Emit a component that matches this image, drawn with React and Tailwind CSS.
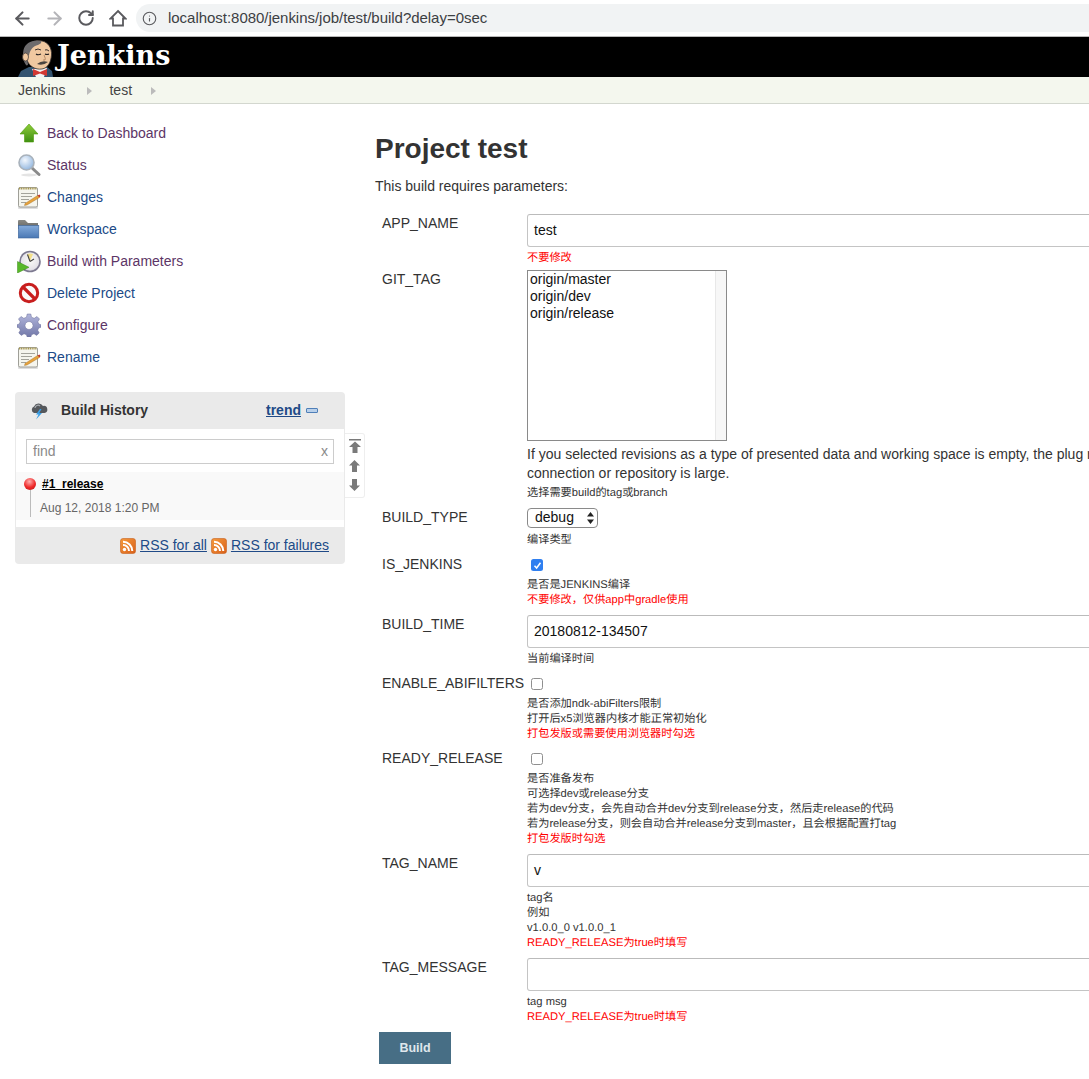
import { ArrowLeft, ArrowRight, RotateCw, Info } from 'lucide-react';

const ArrowIcon = () => (
  <svg width="24" height="24" viewBox="0 0 24 24">
    <defs>
      <linearGradient id="up" x1="0" y1="0" x2="0" y2="1">
        <stop offset="0" stopColor="#8fce3a" />
        <stop offset="1" stopColor="#3f8f12" />
      </linearGradient>
    </defs>
    <path d="M12 3 L21 13 H16.5 V21 H7.5 V13 H3 Z" fill="url(#up)" stroke="#4e9a06" strokeWidth="0.6" />
  </svg>
);

const SearchIcon = () => (
  <svg width="24" height="24" viewBox="0 0 24 24">
    <defs>
      <radialGradient id="lens" cx="0.4" cy="0.35" r="0.7">
        <stop offset="0" stopColor="#f2f7fd" />
        <stop offset="1" stopColor="#8fb4de" />
      </radialGradient>
    </defs>
    <ellipse cx="12" cy="22" rx="8" ry="1.5" fill="#e4e4e4" />
    <path d="M14.5 14.5 L22 21.5" stroke="#8a8a8a" strokeWidth="3" strokeLinecap="round" />
    <circle cx="9.5" cy="9.5" r="7.5" fill="url(#lens)" stroke="#a9b2bb" strokeWidth="1.6" />
  </svg>
);

const NotepadIcon = () => (
  <svg width="24" height="24" viewBox="0 0 24 24">
    <rect x="1" y="4" width="20" height="20" rx="1" fill="#dedede" />
    <rect x="1.5" y="2.5" width="19" height="19.5" rx="1.5" fill="#f5f5ee" stroke="#8c8c84" strokeWidth="0.8" />
    <path d="M2 3.5 H20" stroke="#a89a55" strokeWidth="2.2" strokeDasharray="1.2 0.6" />
    <path d="M4 8.5 H18 M4 11.5 H15 M4 14.5 H12 M4 17.5 H9" stroke="#a4a49c" strokeWidth="1" />
    <path d="M8 18.5 L20.5 10.5 L22.5 12.5 L10 20 L7.5 20.5 Z" fill="#e6a23c" stroke="#9a6a20" strokeWidth="0.4" />
    <path d="M20.5 10.5 L22.5 9.5 L23.5 11 L22.5 12.5 Z" fill="#c0392b" />
  </svg>
);

const FolderIcon = () => (
  <svg width="24" height="24" viewBox="0 0 24 24">
    <defs>
      <linearGradient id="folder" x1="0" y1="0" x2="0" y2="1">
        <stop offset="0" stopColor="#84abdb" />
        <stop offset="1" stopColor="#4a78b4" />
      </linearGradient>
      <linearGradient id="tab" x1="0" y1="0" x2="0" y2="1">
        <stop offset="0" stopColor="#8a8a86" />
        <stop offset="1" stopColor="#62625e" />
      </linearGradient>
    </defs>
    <path d="M1 4 Q1 3 2 3 H8 L11 6 H21 V12 H1 Z" fill="url(#tab)" />
    <rect x="1.3" y="8.5" width="20.5" height="12.5" fill="url(#folder)" stroke="#3d659a" strokeWidth="0.6" />
  </svg>
);

const BuildIcon = () => (
  <svg width="24" height="24" viewBox="0 0 24 24">
    <defs>
      <radialGradient id="clock" cx="0.5" cy="0.45" r="0.6">
        <stop offset="0" stopColor="#fbfbf8" />
        <stop offset="0.75" stopColor="#e4e2e8" />
        <stop offset="1" stopColor="#b4b0c4" />
      </radialGradient>
    </defs>
    <circle cx="13" cy="12.5" r="10" fill="url(#clock)" stroke="#7d7a90" strokeWidth="1.6" />
    <path d="M13 12.5 L10 5 A8 8 0 0 1 16 5 Z" fill="#f3e08a" />
    <path d="M13 12.5 L10.5 5.5 M13 12.5 L17 10" stroke="#444" strokeWidth="1.1" />
    <path d="M0.5 12.5 L12 18.3 L0.5 24 Z" fill="#58b82a" stroke="#3a8a18" strokeWidth="0.5" />
  </svg>
);

const DeleteIcon = () => (
  <svg width="24" height="24" viewBox="0 0 24 24">
    <circle cx="12" cy="12" r="8.7" fill="#fafafa" stroke="#c81e1e" strokeWidth="3" />
    <path d="M6 6 L18 18" stroke="#c81e1e" strokeWidth="3.2" />
  </svg>
);

const GearIcon = () => (
  <svg width="24" height="24" viewBox="0 0 24 24">
    <defs>
      <linearGradient id="gear" x1="0" y1="0" x2="0" y2="1">
        <stop offset="0" stopColor="#b2b6dc" />
        <stop offset="1" stopColor="#7278a8" />
      </linearGradient>
    </defs>
    <path
      fillRule="evenodd"
      fill="url(#gear)"
      stroke="#6a6e98"
      strokeWidth="0.5"
      d="M10.2 1 H13.8 L14.5 4.2 L17.2 5.3 L20 3.5 L22.5 6 L20.8 8.8 L21.8 11 L24 11.8 V14.2 L21.7 15 L20.7 17.2 L22.2 20 L19.6 22.4 L17 20.7 L14.6 21.7 L13.8 24 H10.2 L9.4 21.7 L7 20.7 L4.4 22.4 L1.8 20 L3.3 17.2 L2.3 15 L0 14.2 V11.8 L2.2 11 L3.2 8.8 L1.5 6 L4 3.5 L6.8 5.3 L9.5 4.2 Z M12 8.5 A4 4 0 1 0 12.01 8.5 Z"
    />
  </svg>
);

const StormIcon = () => (
  <svg width="18" height="18" viewBox="0 0 18 18">
    <path d="M4 11 A3.5 3.5 0 0 1 4 4.5 A5 5 0 0 1 13 4 A3.5 3.5 0 0 1 14.5 11 Z" fill="#55585c" />
    <path d="M5 6 A3 3 0 0 1 10 4" stroke="#a8acb0" strokeWidth="1.2" fill="none" />
    <path d="M10 7 L6 12.5 H8.5 L6 17.5 L12 11 H9.3 L11.5 7 Z" fill="#3aa0e8" />
  </svg>
);

const RssIcon = () => (
  <svg width="16" height="16" viewBox="0 0 16 16">
    <defs>
      <linearGradient id="rss" x1="0" y1="0" x2="1" y2="1">
        <stop offset="0" stopColor="#f59a3c" />
        <stop offset="1" stopColor="#d9601a" />
      </linearGradient>
    </defs>
    <rect x="0.5" y="0.5" width="15" height="15" rx="2.5" fill="url(#rss)" stroke="#c8621f" strokeWidth="0.6" />
    <circle cx="4.5" cy="11.5" r="1.7" fill="#fff" />
    <path d="M3 7 A6 6 0 0 1 9 13 M3 3.7 A9.3 9.3 0 0 1 12.3 13" stroke="#fff" strokeWidth="2" fill="none" />
  </svg>
);

const JenkinsLogo = () => (
  <svg width="36" height="37" viewBox="0 0 36 37" className="shrink-0">
    <path d="M1 37 L4 31 L12 27 L30 27 L35 31 L36 37 Z" fill="#33536f" />
    <path d="M15 29 L30 28 L27 37 H19 Z" fill="#f4f4f4" />
    <path d="M16 29 L23 32 L30 29 L30 36 L23 33.5 L16 36 Z" fill="#d33833" />
    <path d="M10 7 C12 2 19 0 25 1 C31 2 35 8 34.5 15 C34 22 31 28 25 29 C18 30 12 26 10 20 Z" fill="#f0c8a0" stroke="#3a3230" strokeWidth="0.8" />
    <path d="M24 1 C16 -1 8 3 6.5 10 C5.5 15 6 21 9 25 C10 26 11 25 11 24 C10 21 10 18 12 15 C13 10 16 6 21 5 C23 4 25 3 24 1 Z" fill="#6d6b6d" />
    <ellipse cx="8.5" cy="17" rx="3" ry="4" fill="#f0c8a0" stroke="#3a3230" strokeWidth="0.7" />
    <path d="M18 10 Q21 8 24 10 M28 10 Q30 9 32 11" stroke="#3a3230" strokeWidth="1" fill="none" />
    <path d="M19 14 Q21 15.5 24 14 M28 14 Q30 15 32 14" stroke="#231f20" strokeWidth="1.1" fill="none" />
    <path d="M27 15 Q29 19 28 20 L26 20" stroke="#a87a55" strokeWidth="0.8" fill="none" />
    <path d="M20 24 Q25 20 31 22 Q26 26 20 24 Z" fill="#49433f" />
  </svg>
);

const navItems = [
  { label: 'Back to Dashboard', Icon: ArrowIcon, color: 'text-[#5c3566]' },
  { label: 'Status', Icon: SearchIcon, color: 'text-[#5c3566]' },
  { label: 'Changes', Icon: NotepadIcon, color: 'text-[#204a87]' },
  { label: 'Workspace', Icon: FolderIcon, color: 'text-[#204a87]' },
  { label: 'Build with Parameters', Icon: BuildIcon, color: 'text-[#5c3566]' },
  { label: 'Delete Project', Icon: DeleteIcon, color: 'text-[#204a87]' },
  { label: 'Configure', Icon: GearIcon, color: 'text-[#5c3566]' },
  { label: 'Rename', Icon: NotepadIcon, color: 'text-[#204a87]' },
];

const TextInput = ({ value }) => (
  <div className="h-[33px] w-[640px] rounded-[3px] border border-[#c4c4c4] border-t-[#bbb] bg-white pl-[6px] text-[14px] leading-[31px] text-[#111]">
    {value}
  </div>
);

const Checkbox = ({ checked }) => (
  <span className="flex h-[22px] items-start pl-[4px] pt-[4px]">
    {checked ? (
      <span className="flex h-[12px] w-[12px] items-center justify-center rounded-[2.5px] bg-[#2f7ff0]">
        <svg width="9" height="9" viewBox="0 0 9 9">
          <path d="M1.5 4.8 L3.6 7 L7.5 1.8" stroke="#fff" strokeWidth="1.5" fill="none" />
        </svg>
      </span>
    ) : (
      <span className="h-[12px] w-[12px] rounded-[2.5px] border border-[#8f8f8f] bg-white" />
    )}
  </span>
);

const Desc = ({ lines }) => (
  <div className="translate-y-px whitespace-nowrap text-[11.2px] leading-[15px] text-[#333] [text-rendering:geometricPrecision]">
    {lines.map((line) =>
      line.red ? (
        <div key={line.text} className="text-[#f00]">
          {line.text}
        </div>
      ) : (
        <div key={line.text}>{line.text}</div>
      )
    )}
  </div>
);

const Row = ({ label, className = 'mb-2', children }) => (
  <div className={`flex ${className}`}>
    <div className="w-[145px] shrink-0 whitespace-nowrap text-[14px] leading-[18px]">{label}</div>
    <div className="min-w-0">{children}</div>
  </div>
);

const App = () => (
  <div className="h-[1079px] w-full overflow-hidden bg-white text-[#333] [font-family:'Liberation_Sans','Noto_Sans_CJK_SC',sans-serif]">
    {/* browser toolbar */}
    <div className="flex h-[37px] items-center border-b border-[#b8b8b8] bg-white pl-[6px]">
      <span className="flex w-8 justify-center">
        <ArrowLeft size={21} strokeWidth={2.4} className="text-[#5a5a5e]" />
      </span>
      <span className="flex w-8 justify-center">
        <ArrowRight size={21} strokeWidth={2.4} className="text-[#b4b4b8]" />
      </span>
      <span className="flex w-8 justify-center">
        <RotateCw size={18} strokeWidth={2.6} className="text-[#5a5a5e]" />
      </span>
      <span className="flex w-8 justify-center">
        <svg width="18" height="18" viewBox="0 0 18 18">
          <path d="M9 2 L16.5 9.5 H14 V16.5 H4 V9.5 H1.5 Z" fill="none" stroke="#5a5a5e" strokeWidth="1.8" />
        </svg>
      </span>
      <div className="ml-[2px] flex h-[28px] flex-1 items-center rounded-l-[14px] bg-[#f1f3f4] pl-[6px]">
        <Info size={15} strokeWidth={1.8} className="text-[#5a5a5e]" />
        <span className="ml-[11px] text-[15px] tracking-[-0.03px] text-[#3c4043]">localhost:8080/jenkins/job/test/build?delay=0sec</span>
      </div>
    </div>

    {/* jenkins header */}
    <div className="flex h-[40px] items-end overflow-hidden bg-black pl-[17px]">
      <JenkinsLogo />
      <span className="mb-[5px] ml-[4px] text-[27px] font-bold leading-[32px] text-white [font-family:'DejaVu_Serif',serif]">
        Jenkins
      </span>
    </div>

    {/* breadcrumb */}
    <div className="flex h-[27px] items-center border-b border-[#d3d7cf] bg-[#f4f7ee] pl-[18px] pt-px text-[14px] text-[#444]">
      <span>Jenkins</span>
      <span className="ml-[22px] h-0 w-0 border-y-[4px] border-l-[5px] border-y-transparent border-l-[#bbb]" />
      <span className="ml-[17px]">test</span>
      <span className="ml-[19px] h-0 w-0 border-y-[4px] border-l-[5px] border-y-transparent border-l-[#bbb]" />
    </div>

    <div className="flex">
      {/* side panel */}
      <aside className="w-[375px] shrink-0 pl-[15px] pt-[13px]">
        <ul>
          {navItems.map(({ label, Icon, color }) => (
            <li key={label} className="flex h-8 items-center text-[14px]">
              <span className="ml-[2px] flex w-[30px] shrink-0">
                <Icon />
              </span>
              <span className={color}>{label}</span>
            </li>
          ))}
        </ul>

        <div className="relative mt-[19px] w-[330px] overflow-visible rounded-[4px] bg-[#eaeaea]">
          <div className="flex h-[37px] items-center pl-[15px] pr-[27px] text-[14px]">
            <StormIcon />
            <span className="ml-[13px] font-bold">Build History</span>
            <span className="ml-auto font-bold text-[#204a87] underline">trend</span>
            <span className="ml-[5px] h-[5px] w-[12px] rounded-[1px] border border-[#4f7fb8] bg-[#b9d0ea]" />
          </div>
          <div className="border-x border-[#eaeaea] bg-white pt-[10px]">
            <div className="mx-[10px] flex h-[25px] items-center justify-between border border-[#ccc] bg-white pl-[6px] pr-[5px] text-[14px] text-[#8a8a8a]">
              <span>find</span>
              <span>x</span>
            </div>
            <div className="mt-[8px] h-[48px] bg-[#f9f9f9] pl-[8px]">
              <div className="flex">
                <div className="flex w-[12px] shrink-0 flex-col items-center pt-[6px]">
                  <span className="h-[12px] w-[12px] rounded-full bg-[radial-gradient(circle_at_45%_30%,#ffb0b0,#ef2929_55%,#b01818)]" />
                  <span className="h-[27px] w-px bg-[#bbb]" />
                </div>
                <div className="ml-[6px] text-[12px]">
                  <div className="pt-[4px] font-bold leading-[16px] text-black underline">#1_release</div>
                  <div className="-ml-[2px] mt-[8px] leading-[16px] text-[#666]">Aug 12, 2018 1:20 PM</div>
                </div>
              </div>
            </div>
            <div className="h-[7px]" />
          </div>
          <div className="flex h-[37px] items-center justify-end pr-[16px] text-[14px] text-[#204a87] underline">
            <RssIcon />
            <span className="ml-[4px]">RSS for all</span>
            <span className="ml-[4px]">
              <RssIcon />
            </span>
            <span className="ml-[4px]">RSS for failures</span>
          </div>

          {/* build list scroll controls */}
          <div className="absolute left-full top-[41px] flex h-[65px] w-[20px] flex-col items-center gap-[7px] rounded-r-[3px] border border-l-0 border-[#eee] bg-white pt-[5px]">
            <svg width="12" height="14" viewBox="0 0 12 14">
              <path d="M0 0 H12 V1.5 H0 Z M6 2.5 L12 8 H8.5 V14 H3.5 V8 H0 Z" fill="#7a7a7a" />
            </svg>
            <svg width="11" height="12" viewBox="0 0 11 12">
              <path d="M5.5 0 L11 5.5 H8 V12 H3 V5.5 H0 Z" fill="#7a7a7a" />
            </svg>
            <svg width="11" height="12" viewBox="0 0 11 12">
              <path d="M3 0 H8 V6.5 H11 L5.5 12 L0 6.5 H3 Z" fill="#7a7a7a" />
            </svg>
          </div>
        </div>
      </aside>

      {/* main panel */}
      <main className="min-w-0 flex-1 pt-[29px]">
        <h1 className="text-[28px] font-bold leading-[32px]">Project test</h1>
        <p className="mt-[12px] text-[14px] leading-[18px]">This build requires parameters:</p>

        <div className="mt-[19px] pl-[7px]">
          <Row label="APP_NAME" className="mb-[5px]">
            <TextInput value="test" />
            <div className="mt-[3px]">
              <Desc lines={[{ text: '不要修改', red: true }]} />
            </div>
          </Row>

          <Row label="GIT_TAG">
            <div className="flex h-[171px] w-[200px] border border-[#8a8a8a] bg-white text-[14px] leading-[17px] text-[#111]">
              <div className="flex-1 pl-[2px]">
                <div>origin/master</div>
                <div>origin/dev</div>
                <div>origin/release</div>
              </div>
              <div className="w-[11px] border-l border-[#e8e8e8] bg-[#f7f7f7]" />
            </div>
            <div className="mt-[4px] w-[640px] text-[14px] leading-[19px]">
              <div className="whitespace-nowrap">
                If you selected revisions as a type of presented data and working space is empty, the plug r
              </div>
              <div>connection or repository is large.</div>
            </div>
            <div className="mt-[2px]">
              <Desc lines={[{ text: '选择需要build的tag或branch' }]} />
            </div>
          </Row>

          <Row label="BUILD_TYPE">
            <div className="flex h-[20px] w-[71px] items-start justify-between rounded-[4px] border border-[#8a8a8a] bg-white pl-[7px] pr-[3px] text-[14px] leading-[17px] text-[#111]">
              <span>debug</span>
              <svg className="mt-[3px]" width="7" height="12" viewBox="0 0 7 12">
                <path d="M3.5 0 L7 4.5 H0 Z M3.5 12 L0 7.5 H7 Z" fill="#222" />
              </svg>
            </div>
            <div className="mt-[4px]">
              <Desc lines={[{ text: '编译类型' }]} />
            </div>
          </Row>

          <Row label="IS_JENKINS">
            <Checkbox checked />
            <Desc lines={[{ text: '是否是JENKINS编译' }, { text: '不要修改，仅供app中gradle使用', red: true }]} />
          </Row>

          <Row label="BUILD_TIME">
            <TextInput value="20180812-134507" />
            <div className="mt-[3px]">
              <Desc lines={[{ text: '当前编译时间' }]} />
            </div>
          </Row>

          <Row label="ENABLE_ABIFILTERS">
            <Checkbox />
            <Desc
              lines={[
                { text: '是否添加ndk-abiFilters限制' },
                { text: '打开后x5浏览器内核才能正常初始化' },
                { text: '打包发版或需要使用浏览器时勾选', red: true },
              ]}
            />
          </Row>

          <Row label="READY_RELEASE">
            <Checkbox />
            <Desc
              lines={[
                { text: '是否准备发布' },
                { text: '可选择dev或release分支' },
                { text: '若为dev分支，会先自动合并dev分支到release分支，然后走release的代码' },
                { text: '若为release分支，则会自动合并release分支到master，且会根据配置打tag' },
                { text: '打包发版时勾选', red: true },
              ]}
            />
          </Row>

          <Row label="TAG_NAME">
            <TextInput value="v" />
            <div className="mt-[3px]">
              <Desc
                lines={[
                  { text: 'tag名' },
                  { text: '例如' },
                  { text: 'v1.0.0_0 v1.0.0_1' },
                  { text: 'READY_RELEASE为true时填写', red: true },
                ]}
              />
            </div>
          </Row>

          <Row label="TAG_MESSAGE">
            <TextInput value="" />
            <div className="mt-[3px]">
              <Desc lines={[{ text: 'tag msg' }, { text: 'READY_RELEASE为true时填写', red: true }]} />
            </div>
          </Row>

          <button className="-ml-[3px] h-[32px] w-[72px] bg-[#476e85] text-[12.5px] font-bold text-[#dfe7ec]">Build</button>
        </div>
      </main>
    </div>
  </div>
);

export default App;
